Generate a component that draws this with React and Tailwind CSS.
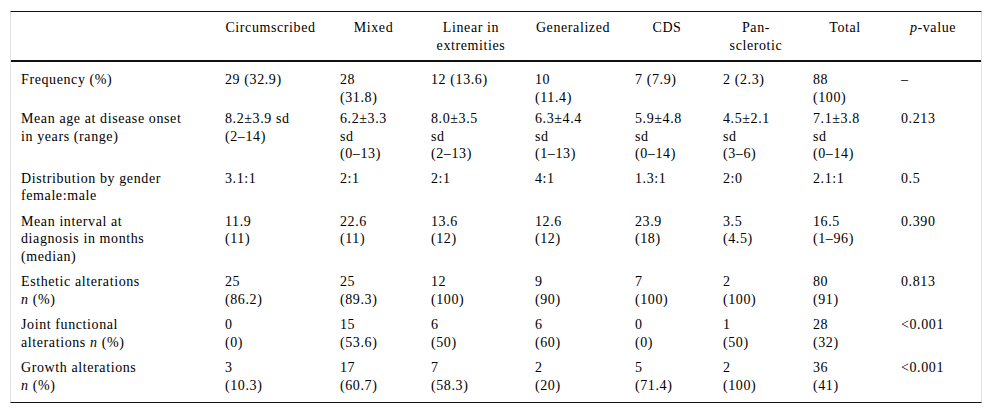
const font = { fontFamily: '"Liberation Serif", "Times New Roman", serif' };

const headers = [
  ['Circumscribed'],
  ['Mixed'],
  ['Linear in', 'extremities'],
  ['Generalized'],
  ['CDS'],
  ['Pan-', 'sclerotic'],
  ['Total'],
  [<><i>p</i>-value</>],
];

const N = (rest) => <><i>n</i>{rest}</>;

// pad = vertical padding per row, tuned to the reference
const rows = [
  {
    pad: 'pt-[9px] pb-0',
    label: ['Frequency (%)'],
    cells: [['29 (32.9)'], ['28', '(31.8)'], ['12 (13.6)'], ['10', '(11.4)'], ['7 (7.9)'], ['2 (2.3)'], ['88', '(100)'], ['–']],
  },
  {
    pad: 'pt-[4px] pb-[3px]',
    label: ['Mean age at disease onset', 'in years (range)'],
    cells: [
      ['8.2±3.9 sd', '(2–14)'],
      ['6.2±3.3', 'sd', '(0–13)'],
      ['8.0±3.5', 'sd', '(2–13)'],
      ['6.3±4.4', 'sd', '(1–13)'],
      ['5.9±4.8', 'sd', '(0–14)'],
      ['4.5±2.1', 'sd', '(3–6)'],
      ['7.1±3.8', 'sd', '(0–14)'],
      ['0.213'],
    ],
  },
  {
    pad: 'py-[4px]',
    label: ['Distribution by gender', 'female:male'],
    cells: [['3.1:1'], ['2:1'], ['2:1'], ['4:1'], ['1.3:1'], ['2:0'], ['2.1:1'], ['0.5']],
  },
  {
    pad: 'py-[4px]',
    label: ['Mean interval at', 'diagnosis in months', '(median)'],
    cells: [['11.9', '(11)'], ['22.6', '(11)'], ['13.6', '(12)'], ['12.6', '(12)'], ['23.9', '(18)'], ['3.5', '(4.5)'], ['16.5', '(1–96)'], ['0.390']],
  },
  {
    pad: 'py-[4px]',
    label: ['Esthetic alterations', N(' (%)')],
    cells: [['25', '(86.2)'], ['25', '(89.3)'], ['12', '(100)'], ['9', '(90)'], ['7', '(100)'], ['2', '(100)'], ['80', '(91)'], ['0.813']],
  },
  {
    pad: 'py-[4px]',
    label: ['Joint functional', <>alterations <i>n</i> (%)</>],
    cells: [['0', '(0)'], ['15', '(53.6)'], ['6', '(50)'], ['6', '(60)'], ['0', '(0)'], ['1', '(50)'], ['28', '(32)'], ['<0.001']],
  },
  {
    pad: 'pt-[4px] pb-[8px]',
    label: ['Growth alterations', N(' (%)')],
    cells: [['3', '(10.3)'], ['17', '(60.7)'], ['7', '(58.3)'], ['2', '(20)'], ['5', '(71.4)'], ['2', '(100)'], ['36', '(41)'], ['<0.001']],
  },
];

const grid = 'grid grid-cols-[206px_115px_91px_104px_100px_88px_90px_88px_88px]';

function Lines({ lines }) {
  return lines.map((l, i) => (
    <div key={i} className="whitespace-nowrap">
      {l}
    </div>
  ));
}

export default function App() {
  return (
    <div className="w-[992px] h-[415px] bg-white pt-[11px] pl-[10px]" style={font}>
      <div className="w-[972px] border-x border-x-[#e3e3e3] border-t border-t-[#111] border-b border-b-[#111] text-[14px] tracking-[0.6px] leading-[17.5px] text-black">
        <div className={`${grid} h-[50px] border-b-2 border-[#111]`}>
          <div />
          {headers.map((h, i) => (
            <div key={i} className="pl-2 pr-4 pt-[7px] text-center">
              <Lines lines={h} />
            </div>
          ))}
        </div>
        {rows.map((r, i) => (
          <div key={i} className={grid}>
            <div className={`pl-[10px] ${r.pad}`}>
              <Lines lines={r.label} />
            </div>
            {r.cells.map((c, j) => (
              <div key={j} className={`pl-2 pr-4 ${r.pad}`}>
                <Lines lines={c} />
              </div>
            ))}
          </div>
        ))}
      </div>
    </div>
  );
}
